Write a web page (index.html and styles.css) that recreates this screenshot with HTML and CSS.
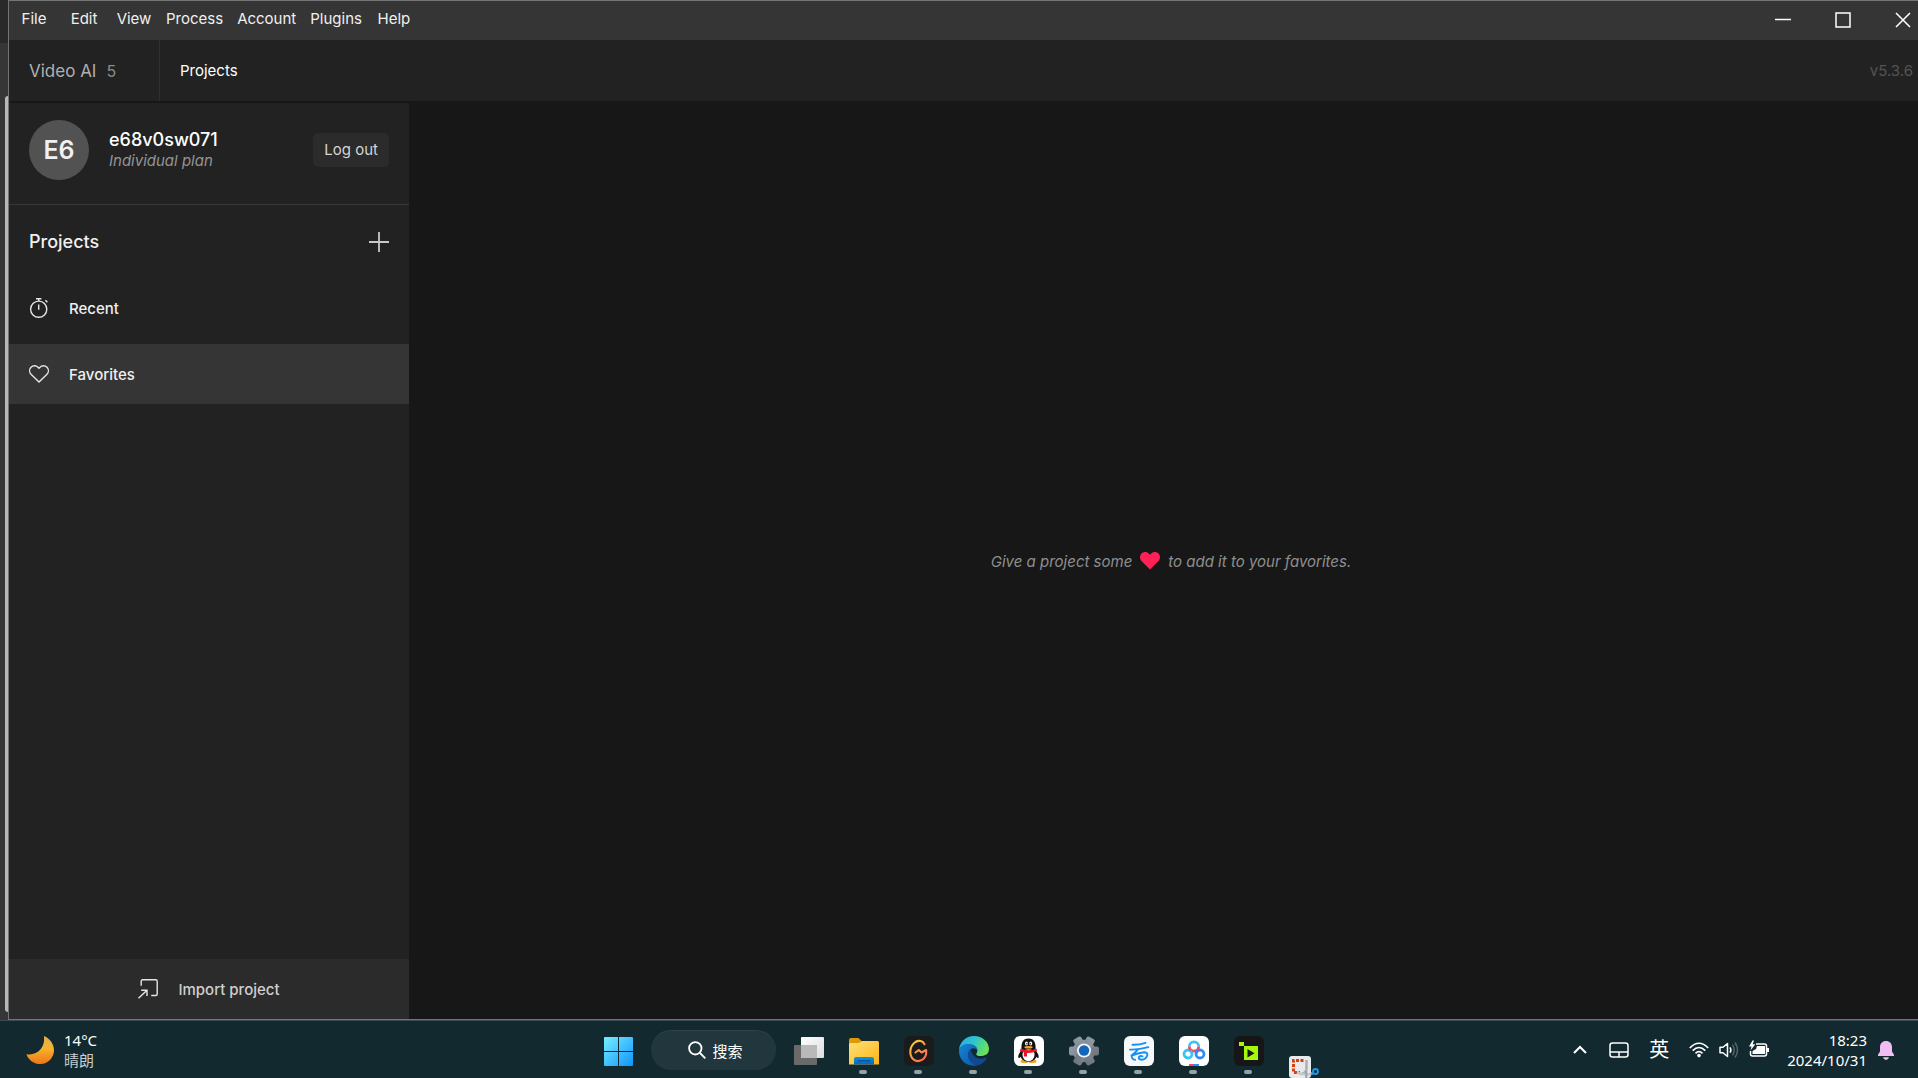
FILE: index.html
```html
<!DOCTYPE html>
<html lang="en">
  <head>
    <meta charset="UTF-8" />
    <meta name="viewport" content="width=device-width, initial-scale=1.0" />
    <title>Video AI</title>
    <link rel="stylesheet" href="styles.css">
  </head>
  <body>
    <div class="desktop">
      <div class="behind"><div class="behind-edge"></div></div>

      <div class="window">
        <header class="menubar">
          <nav class="menus">
            <button>File</button>
            <button>Edit</button>
            <button>View</button>
            <button>Process</button>
            <button>Account</button>
            <button>Plugins</button>
            <button>Help</button>
          </nav>
          <div class="window-controls">
            <button aria-label="Minimize">
              <svg width="16" height="16" viewBox="0 0 16 16"><path d="M0 7.5h16" stroke-width="1.5" /></svg>
            </button>
            <button aria-label="Maximize">
              <svg width="16" height="16" viewBox="0 0 16 16"><path d="M1 1h14v14H1z" stroke-width="1.5" /></svg>
            </button>
            <button aria-label="Close">
              <svg width="16" height="16" viewBox="0 0 16 16"><path d="M1 1l14 14M15 1L1 15" stroke-width="1.5" /></svg>
            </button>
          </div>
        </header>

        <div class="topbar">
          <div class="brand">Video AI <span>5</span></div>
          <a class="tab" href="#projects">Projects</a>
          <span class="version">v5.3.6</span>
        </div>

        <div class="content">
          <aside class="sidebar">
            <section class="account">
              <div class="avatar">E6</div>
              <div class="user">
                <div class="user-name">e68v0sw071</div>
                <div class="user-plan">Individual plan</div>
              </div>
              <button class="logout">Log out</button>
            </section>

            <div class="section-head">
              <h2>Projects</h2>
              <button aria-label="New project">
                <svg width="20" height="20" viewBox="0 0 20 20"><path d="M10 0v20M0 10h20" stroke="#c8c8c8" stroke-width="1.8" /></svg>
              </button>
            </div>

            <nav class="side-nav">
              <a href="#recent">
                <svg width="20" height="20" viewBox="0 0 20 20">
                  <circle cx="9.7" cy="11.2" r="8.1" />
                  <path d="M9.7 6.6v5.2M7 .7h5.4M9.7 .7v2.4M16.4 2.2l2 2" />
                </svg>
                Recent
              </a>
              <a href="#favorites" class="active">
                <svg width="20" height="20" viewBox="0 0 20 20">
                  <path d="M10 18 2 10.2C.2 8.3 .2 5.2 2 3.3c2-2 5.200-2 7 0l1 1 1-1c1.800-2 5-2 7 0 1.800 1.900 1.800 5 0 6.900z" />
                </svg>
                Favorites
              </a>
            </nav>

            <button class="import">
              <svg width="20" height="20" viewBox="0 0 20 20">
                <path d="M3.200 6.700V2.200Q3.200 .8 4.600 .8H17.800Q19.200 .8 19.200 2.200V15Q19.200 16.500 17.800 16.500H13.200M.5 19.300 9 11.200M3.200 11.200H9V17" />
              </svg>
              Import project
            </button>
          </aside>

          <main class="empty">
            <p>Give a project some</p>
            <svg width="20" height="20" viewBox="0 0 20 20">
              <path d="M10 18.400 1.500 10C-.5 7.900-.4 4.500 1.500 2.600c2-2 5.300-2 7.300 0L10 3.800l1.200-1.200c2-2 5.300-2 7.300 0 1.900 1.900 2 5.300 0 7.400z" fill="#ff2056" />
            </svg>
            <p>to add it to your favorites.</p>
          </main>
        </div>
      </div>
    </div>

    <footer class="taskbar">
      <button class="weather">
        <svg width="28" height="28" viewBox="0 0 28 28">
          <defs>
            <linearGradient id="moon" x1="0" y1="0" x2="0" y2="1">
              <stop offset="0" stop-color="#e0b04a" />
              <stop offset=".45" stop-color="#f5b32e" />
              <stop offset="1" stop-color="#ef7417" />
            </linearGradient>
          </defs>
          <path d="M18 0C24 2.500 28 8 28 14.200 28 21.500 22 28 14.500 28 8 28 2.500 24.300 .4 18.200 11 20 19.500 12 18 0z" fill="url(#moon)" />
        </svg>
        <span class="lines"><span>14°C</span><span class="dim">晴朗</span></span>
      </button>

      <div class="apps">
        <button class="app" aria-label="Start">
          <svg width="30" height="30" viewBox="0 0 30 30">
            <defs>
              <linearGradient id="win" gradientUnits="userSpaceOnUse" x1="0" y1="0" x2="30" y2="30">
                <stop offset="0" stop-color="#79efff" />
                <stop offset="1" stop-color="#0c93fb" />
              </linearGradient>
            </defs>
            <path d="M1 1h13v14H0V2a1 1 0 0 1 1-1zM15 1h13a1 1 0 0 1 1 1v13H15zM0 16h14v14H1a1 1 0 0 1-1-1zM15 16h14v13a1 1 0 0 1-1 1H15z" fill="url(#win)" />
          </svg>
        </button>

        <button class="search">
          <svg width="18" height="18" viewBox="0 0 18 18"><circle cx="7.300" cy="7.300" r="6.200" /><path d="M12 12l5.300 5.300" /></svg>
          搜索
        </button>

        <button class="app" aria-label="Task view">
          <svg width="30" height="30" viewBox="0 0 30 30">
            <defs>
              <linearGradient id="tv" x1="0" y1="0" x2="1" y2="1">
                <stop offset="0" stop-color="#fff" />
                <stop offset="1" stop-color="#dcdcdc" />
              </linearGradient>
            </defs>
            <rect x="0" y="9" width="23" height="20" rx="1" fill="#6a6a6a" />
            <rect x="7" y="1" width="23" height="21" rx="1" fill="url(#tv)" />
            <path d="M7 9h16v13H8a1 1 0 0 1-1-1z" fill="#b9b9b9" />
          </svg>
        </button>

        <button class="app running" aria-label="File Explorer">
          <svg width="30" height="30" viewBox="0 0 30 30">
            <defs>
              <linearGradient id="folder" x1="0" y1="0" x2="1" y2="1">
                <stop offset="0" stop-color="#ffe07a" />
                <stop offset="1" stop-color="#fbb514" />
              </linearGradient>
              <linearGradient id="tray" x1="0" y1="0" x2="0" y2="1">
                <stop offset="0" stop-color="#1493e0" />
                <stop offset="1" stop-color="#0a63ba" />
              </linearGradient>
            </defs>
            <path d="M0 4a2 2 0 0 1 2-2h7.500l3.500 3.500V9H0z" fill="#dc9a08" />
            <path d="M0 8.500q0-1.500 1.500-1.500H10l3-2h15.500Q30 5 30 6.500V28.500H0z" fill="url(#folder)" />
            <path d="M5 28.500V23q0-2 2-2h16q2 0 2 2v5.500z" fill="url(#tray)" />
            <path d="M8.500 24.800h13" stroke="#07509b" stroke-width="1.300" />
          </svg>
        </button>

        <button class="app running" aria-label="Game platform">
          <svg width="30" height="30" viewBox="0 0 30 30">
            <defs>
              <linearGradient id="gg" x1="0" y1="0" x2=".8" y2="1">
                <stop offset="0" stop-color="#f6e22c" />
                <stop offset=".5" stop-color="#fb9a4b" />
                <stop offset="1" stop-color="#fb6c58" />
              </linearGradient>
            </defs>
            <rect width="30" height="30" rx="6" fill="#1b1b1b" />
            <path d="M20.500 8.200C19 5 15 3.800 11.500 6 5.500 10 4.800 18.500 9 23c4 4.200 11.500 1.500 13-4.500.4-1.500.4-3 .1-4.500l-4.500 2.500-2.800-2.500-3.300 2.500" fill="none" stroke="url(#gg)" stroke-width="2.100" stroke-linecap="round" stroke-linejoin="round" />
          </svg>
        </button>

        <button class="app running" aria-label="Edge">
          <svg width="30" height="30" viewBox="0 0 30 30">
            <defs>
              <linearGradient id="edgeTop" x1="0" y1="0" x2="1" y2=".4">
                <stop offset="0" stop-color="#2aa9e6" />
                <stop offset=".5" stop-color="#2cc3d0" />
                <stop offset="1" stop-color="#67e05c" />
              </linearGradient>
              <linearGradient id="edgeLow" x1="0" y1="0" x2="1" y2="1">
                <stop offset="0" stop-color="#1786d5" />
                <stop offset="1" stop-color="#0b56a4" />
              </linearGradient>
            </defs>
            <path d="M0 14C.5 6 7 0 15 0c8.500 0 15 6 15 13 0 5-4 7-8 7-3.500 0-5.500-1.200-4.500-2.600C19.500 14.500 18 10 13 8.800 7 7.500 2 9.500 0 14z" fill="url(#edgeTop)" />
            <path d="M0 15C0 10.500 4.500 7.800 9.500 8c5 .2 9 3 9 6.500-3-4-8-2-8.500 2.500-.5 5.500 3 11 8.500 12.500C9 31.500 0 25 0 15z" fill="url(#edgeLow)" />
            <path d="M11.500 13c-4 3-4.500 13 7 16.600 4-1 7.500-4 9.200-7.300.4-.8-.3-1-1-.6-5.500 2.800-13 .8-15.200-8.700z" fill="#0f4a8f" />
          </svg>
        </button>

        <button class="app running" aria-label="QQ">
          <svg width="30" height="30" viewBox="0 0 30 30">
            <rect width="30" height="30" rx="6" fill="#fff" />
            <ellipse cx="10.500" cy="25.300" rx="4" ry="1.900" fill="#f5a623" />
            <ellipse cx="18.500" cy="25.300" rx="4" ry="1.900" fill="#f5a623" />
            <path d="M7 15c-3 3.500-3.200 6.500-2.200 7 .8.300 1.500-.7 2.200-1.700zM22 15c3 3.500 3.200 6.500 2.200 7-.8.300-1.500-.7-2.200-1.700z" fill="#111" />
            <ellipse cx="14.500" cy="18.500" rx="8.500" ry="7.300" fill="#111" />
            <ellipse cx="14.500" cy="19" rx="6" ry="6.200" fill="#fff" />
            <path d="M7.500 13.500C6.800 5.500 10 2.500 14.500 2.500s7.700 3 7 11z" fill="#111" />
            <ellipse cx="12.500" cy="7.500" rx="1.500" ry="2" fill="#fff" />
            <ellipse cx="16.700" cy="7.500" rx="1.500" ry="2" fill="#fff" />
            <circle cx="12.900" cy="7.800" r=".7" fill="#111" />
            <circle cx="16.300" cy="7.800" r=".7" fill="#111" />
            <ellipse cx="14.500" cy="11.300" rx="4.200" ry="1.300" fill="#f5a623" />
            <path d="M6.500 12.500q8 3.300 16 0l.5 2.800q-5 2-10 1.700V20.500H9.800V16.300Q7.500 16 6 15z" fill="#e8152a" />
          </svg>
        </button>

        <button class="app running" aria-label="Settings">
          <svg width="30" height="30" viewBox="0 0 30 30">
            <defs>
              <linearGradient id="gear" gradientUnits="userSpaceOnUse" x1="3" y1="3" x2="27" y2="27">
                <stop offset="0" stop-color="#98a1ab" />
                <stop offset="1" stop-color="#666e78" />
              </linearGradient>
            </defs>
            <g fill="url(#gear)">
              <circle cx="15" cy="15" r="11.300" />
              <rect x="0" y="10.500" width="30" height="9" rx="2" />
              <rect x="0" y="10.500" width="30" height="9" rx="2" transform="rotate(60 15 15)" />
              <rect x="0" y="10.500" width="30" height="9" rx="2" transform="rotate(120 15 15)" />
            </g>
            <circle cx="15" cy="14.500" r="7" fill="#f2f6fa" />
            <circle cx="15" cy="14.500" r="5.200" fill="#1565b8" />
          </svg>
        </button>

        <button class="app running" aria-label="Cloud service">
          <svg width="30" height="30" viewBox="0 0 30 30">
            <rect width="30" height="30" rx="6" fill="#f7f8fa" />
            <path d="M8.500 8.700Q15 9 21.500 6.800M6 13.600Q15 14 24.300 11.200M13.500 13.800Q11 17 7.500 19.500 14 17 20 16.300 23.800 16.300 23.300 19.300 22 23.600 17.500 23.800 14 23.500 15 21 16.500 19.300 18.500 20.300M7.500 19.500Q8 23.500 11 23.800" fill="none" stroke="#1590f5" stroke-width="1.900" stroke-linecap="round" />
          </svg>
        </button>

        <button class="app running" aria-label="Net disk">
          <svg width="30" height="30" viewBox="0 0 30 30">
            <rect width="30" height="30" rx="6" fill="#fff" />
            <circle cx="9" cy="18" r="4" fill="none" stroke="#37c5f3" stroke-width="2.800" />
            <circle cx="21" cy="18" r="4" fill="none" stroke="#2e8df6" stroke-width="2.800" />
            <path d="M10.300 10.500a4.700 4.700 0 0 1 9.400 0" fill="none" stroke="#37c5f3" stroke-width="2.800" />
            <path d="M10.300 10.500a4.700 4.700 0 0 0 9.400 0" fill="none" stroke="#f5455f" stroke-width="2.800" />
            <path d="M16.500 14.800l2.500 1.800" stroke="#2e8df6" stroke-width="2.800" />
            <path d="M13.500 14.800l-2.500 1.800" stroke="#37c5f3" stroke-width="2.800" />
            <path d="M10 28h5v2h-5z" fill="#f5455f" />
            <path d="M15 28h5v2h-5z" fill="#2e8df6" />
          </svg>
        </button>

        <button class="app running" aria-label="Video AI">
          <svg width="30" height="30" viewBox="0 0 30 30">
            <rect width="30" height="30" rx="6" fill="#161616" />
            <path d="M5 6h5v4h14v14H10V10H5z" fill="#a6f80b" />
            <path d="M13.500 13v8.500l7-4.200z" fill="#161616" />
          </svg>
        </button>

        <button class="app launching" aria-label="Snipping Tool">
          <svg width="30" height="22" viewBox="0 0 30 22">
            <rect width="22" height="22" rx="3" fill="#e8e9ec" />
            <path d="M14.500 4.500H4.500V16.500H11" fill="none" stroke="#d8400e" stroke-width="3" stroke-dasharray="3 1.500" />
            <path d="M17.500 4v8q0 5-5 6" fill="none" stroke="#a9b0b8" stroke-width="2.500" />
            <path d="M8 16.500Q16 20 23.500 17.500" fill="none" stroke="#c2c8cf" stroke-width="2.500" />
            <path d="M17.300 15v7" stroke="#98a0a8" stroke-width="2" />
            <circle cx="26.500" cy="15.500" r="2.500" fill="none" stroke="#1c9be8" stroke-width="1.800" />
            <path d="M22 18.500l3-1.500" stroke="#1c9be8" stroke-width="1.800" />
          </svg>
        </button>
      </div>

      <div class="tray">
        <button class="tray-item" aria-label="Show hidden icons">
          <svg width="14" height="20" viewBox="0 0 14 20"><path d="M1 13l6-6 6 6" stroke-width="2" /></svg>
        </button>
        <button class="tray-item" aria-label="Touchpad">
          <svg width="20" height="20" viewBox="0 0 20 20"><rect x="1" y="3" width="18" height="14" rx="2.500" stroke-width="1.500" /><path d="M1 12h18M10 12v5" stroke-width="1.500" /></svg>
        </button>
        <button class="ime">英</button>
        <button class="status" aria-label="Network, volume and battery">
          <svg width="20" height="20" viewBox="0 0 20 20">
            <path d="M.8 8Q10-1.500 19.200 8M3.700 10.700Q10 4.300 16.300 10.700M6.500 13.300Q10 9.800 13.500 13.300" stroke-width="1.700" />
            <circle cx="10" cy="15.600" r="1.800" fill="#fff" stroke="none" />
          </svg>
          <svg width="20" height="20" viewBox="0 0 20 20">
            <path d="M1 7.300h3L8.500 3.500v13L4 12.700H1z" stroke-width="1.500" stroke-linejoin="round" />
            <path d="M11 7.300q1.800 2.700 0 5.400" stroke-width="1.500" />
            <path d="M13.500 4.700q3.500 5.300 0 10.600M16 2.500q5 7.500 0 15" stroke="#52646a" stroke-width="1.500" />
          </svg>
          <svg width="20" height="20" viewBox="0 0 20 20">
            <path d="M7 4h8.500q2 0 2 2v8q0 2-2 2H3.500q-2 0-2-2V11" stroke-width="1.500" />
            <path d="M8 6h8v8H3.500V11L7 9zM18 8h2v4h-2zM3.500.5 0 6.500H2.500L1.500 10.500 6.300 4.200H3.600L5 .5z" fill="#fff" stroke="none" />
          </svg>
        </button>
        <button class="lines clock"><span>18:23</span><span>2024/10/31</span></button>
        <button class="bell" aria-label="Notifications">
          <svg width="16" height="20" viewBox="0 0 16 20">
            <path d="M8 1c3.600 0 6 2.600 6 6v4.500l2 3.300V16H0v-1.200l2-3.300V7c0-3.400 2.400-6 6-6zM5 17.300h6q-.7 2.700-3 2.700t-3-2.700z" fill="#f0bdf2" stroke="none" />
          </svg>
        </button>
      </div>
    </footer>
  </body>
</html>
```
FILE: styles.css
```css
* {
  box-sizing: border-box;
}
body {
  margin: 0;
  height: 100vh;
  display: flex;
  flex-direction: column;
  overflow: hidden;
  font-family: Inter, "Noto Sans CJK SC", sans-serif;
  font-size: 15px;
  color: #f0f0f0;
  background-color: #2f2f2f;
}
button {
  padding: 0;
  border: none;
  background: none;
  color: inherit;
  font: inherit;
}
a {
  color: inherit;
  text-decoration: none;
}
svg {
  display: block;
  flex: none;
}

/* desktop: edge of another window, then the app, which runs past the screen */
.desktop {
  flex: 1;
  min-height: 0;
  display: flex;
  margin-right: -16px;
}
.behind {
  flex: none;
  width: 8px;
  padding: 96px 0 8px 5px;
  background: linear-gradient(#292929 43px, #363636 43px);
}
.behind-edge {
  height: 100%;
  border-radius: 6px 0 0 6px;
  background-color: #b8b8b8;
}
.window {
  flex: 1;
  display: flex;
  flex-direction: column;
  border: 1px solid #747474;
  background-color: #171717;
}

.menubar {
  flex: none;
  height: 39px;
  display: flex;
  justify-content: space-between;
  background-color: #353535;
}
.menus,
.window-controls {
  display: flex;
}
.menus button {
  min-width: 50px;
  padding: 0 7px 4px;
}
.window-controls button {
  width: 60px;
  padding-bottom: 1px;
  display: flex;
  align-items: center;
  justify-content: center;
}
.window-controls svg {
  stroke: #fff;
  fill: none;
}

.topbar {
  flex: none;
  height: 61px;
  margin-bottom: 2px;
  display: flex;
  align-items: center;
  background-color: #222;
}
.brand {
  width: 151px;
  height: 100%;
  padding-left: 20px;
  display: flex;
  align-items: center;
  gap: 10px;
  border-right: 1px solid #303030;
  font-size: 17px;
  color: #b0b0b0;
}
.brand span {
  font-size: 16px;
  color: #8c8c8c;
}
.tab {
  padding: 0 20px;
  color: #fff;
}
.version {
  margin-left: auto;
  padding-right: 20px;
  color: #545454;
}

.content {
  flex: 1;
  min-height: 0;
  display: flex;
}
.sidebar {
  flex: none;
  width: 400px;
  display: flex;
  flex-direction: column;
  background-color: #222;
}
.account {
  height: 102px;
  padding: 0 20px 8px;
  display: flex;
  align-items: center;
  border-bottom: 1px solid #373737;
}
.avatar {
  width: 60px;
  height: 60px;
  margin-right: 20px;
  border-radius: 50%;
  background-color: #525252;
  font-size: 25px;
  font-weight: 600;
  line-height: 60px;
  text-align: center;
}
.user-name {
  font-size: 18px;
  font-weight: 500;
  line-height: 22px;
  color: #fff;
}
.user-plan {
  line-height: 20px;
  font-style: italic;
  color: #949494;
}
.logout {
  height: 34px;
  margin-left: auto;
  padding: 0 11px;
  border-radius: 5px;
  background-color: #2b2b2b;
  color: #d4d4d4;
}
.section-head {
  height: 73px;
  padding: 0 20px;
  display: flex;
  align-items: center;
  justify-content: space-between;
}
.section-head h2 {
  margin: 0;
  font-size: 18px;
  font-weight: 500;
}
.side-nav {
  display: flex;
  flex-direction: column;
  gap: 6px;
}
.side-nav a {
  height: 60px;
  padding: 0 20px;
  display: flex;
  align-items: center;
  gap: 20px;
  font-weight: 500;
}
.side-nav .active {
  background-color: #353535;
}
.side-nav svg,
.import svg {
  fill: none;
  stroke: #e6e6e6;
  stroke-width: 1.4;
}
.import {
  height: 60px;
  margin-top: auto;
  display: flex;
  align-items: center;
  justify-content: center;
  gap: 20px;
  background-color: #2b2b2b;
  font-weight: 500;
  color: #cfcfcf;
}
.empty {
  flex: 1;
  display: flex;
  align-items: center;
  justify-content: center;
  gap: 8px;
  font-style: italic;
  color: #8f8f8f;
}

.taskbar {
  flex: none;
  height: 58px;
  padding: 0 24px 0 26px;
  display: grid;
  grid-template-columns: 1fr auto 1fr;
  align-items: center;
  border-top: 1px solid #3b4c51;
  background-color: #12292f;
  font-family: "Noto Sans", "Noto Sans CJK SC", sans-serif;
  font-size: 15px;
  color: #fff;
}
.weather {
  display: flex;
  align-items: center;
  gap: 10px;
  justify-self: start;
}
.lines {
  display: flex;
  flex-direction: column;
  line-height: 20px;
  text-align: left;
}
.dim {
  color: #c5cdd0;
}
.apps {
  display: flex;
  align-items: center;
  padding-left: 2px;
}
.app {
  position: relative;
  width: 55px;
  height: 57px;
  padding-top: 2px;
  display: flex;
  align-items: center;
  justify-content: center;
}
.running::after {
  content: "";
  position: absolute;
  left: 23px;
  bottom: 4px;
  width: 8px;
  height: 4px;
  border-radius: 2px;
  background-color: #96a2a5;
}
.launching {
  align-items: flex-end;
}
.search {
  width: 125px;
  height: 40px;
  margin: 0 5px;
  display: flex;
  align-items: center;
  justify-content: center;
  gap: 6px;
  padding-left: 4px;
  border-radius: 20px;
  border-top: 1px solid #2f444a;
  background-color: #21373d;
}
.search svg {
  fill: none;
  stroke: #fff;
  stroke-width: 1.8;
}
.tray {
  justify-self: end;
  display: flex;
  align-items: center;
}
.tray svg {
  fill: none;
  stroke: #fff;
}
.tray-item + .tray-item {
  margin-left: 22px;
}
.ime {
  margin: 0 20px;
  font-size: 20px;
  line-height: 24px;
}
.status {
  display: flex;
  gap: 10px;
}
.clock {
  margin: 0 11px 0 18px;
  text-align: right;
}
```
